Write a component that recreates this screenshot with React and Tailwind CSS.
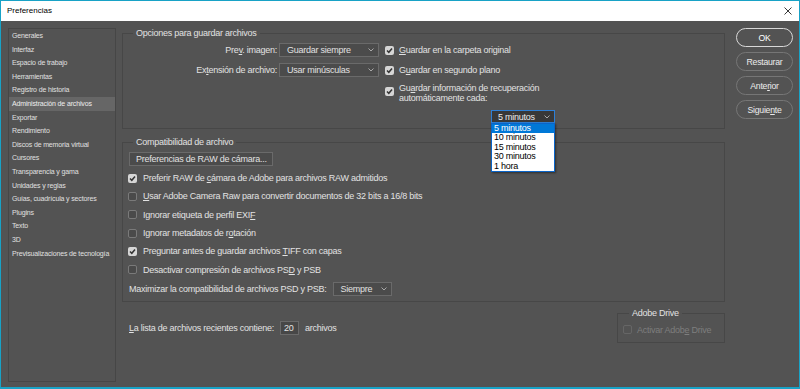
import React from "react";

const Check = ({ checked, disabled }) => (
  <span
    className={
      checked
        ? "w-[9px] h-[9px] rounded-[2px] flex-none flex items-center justify-center bg-[#d6d6d6]"
        : disabled
        ? "w-[9px] h-[9px] rounded-[2px] flex-none border border-[#666666]"
        : "w-[9px] h-[9px] rounded-[2px] flex-none border border-[#7a7a7a] bg-[#4a4a4a]"
    }
  >
    {checked && (
      <svg width="7" height="7" viewBox="0 0 7 7">
        <path d="M1 3.5 L2.8 5.3 L6 1.5" stroke="#333333" strokeWidth="1.5" fill="none" />
      </svg>
    )}
  </span>
);

const Chevron = ({ color = "#a8a8a8" }) => (
  <svg width="6" height="4" viewBox="0 0 6 4" className="flex-none">
    <path d="M0.5 0.5 L3 3 L5.5 0.5" stroke={color} strokeWidth="1" fill="none" />
  </svg>
);

const Select = ({ w, children }) => (
  <div className={`h-[14px] border border-[#6a6a6a] bg-[#4b4b4b] flex items-center justify-between pl-[7px] pr-[4px] ${w}`}>
    <span>{children}</span>
    <Chevron />
  </div>
);

const Row = ({ checked, children }) => (
  <div className="h-[18.3px] flex items-center gap-[6px] pl-[5px]">
    <Check checked={checked} />
    <span>{children}</span>
  </div>
);

const sideItems = [
  "Generales",
  "Interfaz",
  "Espacio de trabajo",
  "Herramientas",
  "Registro de historia",
  "Administración de archivos",
  "Exportar",
  "Rendimiento",
  "Discos de memoria virtual",
  "Cursores",
  "Transparencia y gama",
  "Unidades y reglas",
  "Guías, cuadrícula y sectores",
  "Plugins",
  "Texto",
  "3D",
  "Previsualizaciones de tecnología",
];

const Btn = ({ primary, children }) => (
  <div
    className={
      primary
        ? "h-[19px] rounded-full border border-[#d8d8d8] flex items-center justify-center text-[8.7px] text-white"
        : "h-[19px] rounded-full border border-[#767676] flex items-center justify-center text-[8.7px] text-[#ececec]"
    }
  >
    {children}
  </div>
);

export default function App() {
  return (
    <div className="w-[800px] h-[389px] border-l border-t border-r border-b-2 border-[#18a2c6] flex flex-col font-['Liberation_Sans',Arial,sans-serif] overflow-hidden">
      <div className="h-[20px] flex-none bg-white flex items-center justify-between pl-[6px] pr-[7px]">
        <span className="text-[8px] text-black">Preferencias</span>
        <svg width="8" height="8" viewBox="0 0 8 8">
          <path d="M0.5 0.5 L7.5 7.5 M7.5 0.5 L0.5 7.5" stroke="#222" strokeWidth="0.9" />
        </svg>
      </div>
      <div className="flex-1 bg-[#535353] flex pt-[7px] pl-[7px] pr-[6px] pb-[5px] text-[9px] tracking-[-0.25px] leading-[10px] text-[#e2e2e2]">
        {/* sidebar */}
        <div className="w-[108px] flex-none border border-[#464646] flex flex-col">
          {sideItems.map((t, i) => (
            <div
              key={t}
              className={
                i === 5
                  ? "h-[13.6px] leading-[13.6px] pl-[3px] text-[7px] tracking-[-0.15px] text-[#eeeeee] bg-[#666666] whitespace-nowrap"
                  : "h-[13.6px] leading-[13.6px] pl-[3px] text-[7px] tracking-[-0.15px] text-[#e0e0e0] whitespace-nowrap"
              }
            >
              {t}
            </div>
          ))}
        </div>

        {/* main */}
        <div className="w-[603px] flex-none ml-[6px] flex flex-col">
          <fieldset className="h-[101px] border border-[#474747] flex-none">
            <legend className="ml-[10px] px-[3px] h-[10px] leading-[10px]">Opciones para guardar archivos</legend>
            <div className="flex">
              <div className="w-[256px] flex-none flex flex-col items-end pt-[5px] gap-[6px]">
                <div className="flex items-center gap-[2px]">
                  <span>Pre<u>v</u>. imagen:</span>
                  <Select w="w-[100px]">Guardar siempre</Select>
                </div>
                <div className="flex items-center gap-[2px]">
                  <span>Ex<u>t</u>ensión de archivo:</span>
                  <Select w="w-[100px]">Usar minúsculas</Select>
                </div>
              </div>
              <div className="ml-[6px] flex flex-col pt-[5px]">
                <div className="h-[14px] flex items-center gap-[5px]">
                  <Check checked />
                  <span><u>G</u>uardar en la carpeta original</span>
                </div>
                <div className="h-[14px] mt-[6px] flex items-center gap-[5px]">
                  <Check checked />
                  <span>G<u>u</u>ardar en segundo plano</span>
                </div>
                <div className="mt-[6px] flex items-start gap-[5px]">
                  <div className="mt-[4px]">
                    <Check checked />
                  </div>
                  <span className="leading-[10px]">
                    Gu<u>a</u>rdar información de recuperación
                    <br />
                    automáticamente cada:
                  </span>
                </div>
                <div className="relative mt-[7px] ml-[106px] w-[64px]">
                  <div className="h-[13px] border border-[#2d7fd6] bg-[#383838] flex items-center justify-between pl-[6px] pr-[4px]">
                    <span className="text-[#ececec]">5 minutos</span>
                    <Chevron />
                  </div>
                  <div className="absolute top-full left-0 w-[64px] z-10 bg-white border border-[#0a64c8] shadow-[1px_1px_2px_rgba(0,0,0,0.45)] flex flex-col text-black">
                    <div className="h-[9.4px] leading-[9.4px] pl-[2px] bg-[#0078d7] text-white">5 minutos</div>
                    <div className="h-[9.4px] leading-[9.4px] pl-[2px]">10 minutos</div>
                    <div className="h-[9.4px] leading-[9.4px] pl-[2px]">15 minutos</div>
                    <div className="h-[9.4px] leading-[9.4px] pl-[2px]">30 minutos</div>
                    <div className="h-[9.4px] leading-[9.4px] pl-[2px]">1 hora</div>
                  </div>
                </div>
              </div>
            </div>
          </fieldset>

          <fieldset className="h-[165px] mt-[8px] border border-[#474747] flex-none">
            <legend className="ml-[10px] px-[3px] h-[10px] leading-[10px]">Compatibilidad de archivo</legend>
            <div className="flex flex-col">
              <div className="ml-[6px] mt-[5px] w-[144px] h-[14px] border border-[#6a6a6a] bg-[#4b4b4b] flex items-center pl-[6px]">
                Preferencias de RAW de cámara...
              </div>
              <div className="mt-[3px] flex flex-col">
                <Row checked>
                  Preferir RAW de <u>c</u>ámara de Adobe para archivos RAW admitidos
                </Row>
                <Row>
                  <u>U</u>sar Adobe Camera Raw para convertir documentos de 32 bits a 16/8 bits
                </Row>
                <Row>
                  Ignorar etiqueta de perfil EXI<u>F</u>
                </Row>
                <Row>
                  Ignorar metadatos de r<u>o</u>tación
                </Row>
                <Row checked>
                  Preguntar antes de guardar archivos <u>T</u>IFF con capas
                </Row>
                <Row>
                  Desactivar compresión de archivos PS<u>D</u> y PSB
                </Row>
              </div>
              <div className="mt-[3px] h-[14px] pl-[6px] flex items-center gap-[6px]">
                <span>Maximizar la compatibilidad de archivos PSD y PSB:</span>
                <Select w="w-[59px]">Siempre</Select>
              </div>
            </div>
          </fieldset>

          <div className="mt-[6px] flex justify-between items-start">
            <div className="mt-[13px] pl-[7px] flex items-center h-[14px]">
              <span>
                <u>L</u>a lista de archivos recientes contiene:
              </span>
              <div className="ml-[6px] w-[19px] h-[14px] border border-[#6a6a6a] bg-[#474747] flex items-center pl-[3px]">
                20
              </div>
              <span className="ml-[6px]">archivos</span>
            </div>
            <fieldset className="w-[108px] h-[35px] border border-[#474747] flex-none">
              <legend className="ml-[11px] px-[3px] h-[10px] leading-[10px]">Adobe Drive</legend>
              <div className="mt-[7px] pl-[5px] flex items-center gap-[5px] h-[9px]">
                <Check disabled />
                <span className="text-[#7e7e7e]">
                  Activar Adob<u>e</u> Drive
                </span>
              </div>
            </fieldset>
          </div>
        </div>

        {/* buttons */}
        <div className="w-[57px] flex-none ml-[11px] flex flex-col gap-[5px]">
          <Btn primary>OK</Btn>
          <Btn>Restaurar</Btn>
          <Btn>
            Ante<u>r</u>ior
          </Btn>
          <Btn>
            Siguie<u>n</u>te
          </Btn>
        </div>
      </div>
    </div>
  );
}
